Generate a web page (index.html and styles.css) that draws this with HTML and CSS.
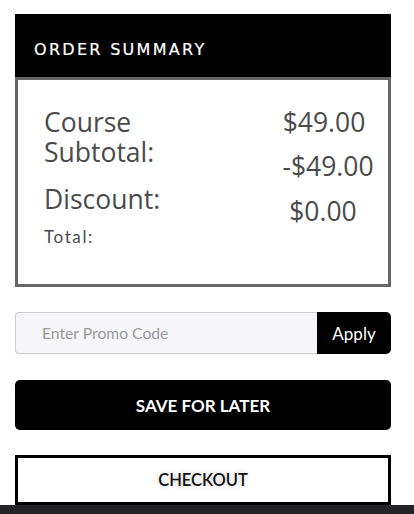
FILE: index.html
```html
<!DOCTYPE html>
<html lang="en">
<head>
<meta charset="utf-8">
<title>Order Summary</title>
<link rel="stylesheet" href="styles.css">
</head>
<body>
<div class="page">
  <section class="summary">
    <h2 class="summary-title">ORDER SUMMARY</h2>
    <div class="summary-body">
      <div class="labels">
        <div class="label big">Course Subtotal:</div>
        <div class="label big discount">Discount:</div>
        <div class="label small">Total:</div>
      </div>
      <div class="values">
        <div class="value">$49.00</div>
        <div class="value v2">-$49.00</div>
        <div class="value v3">$0.00</div>
      </div>
    </div>
  </section>

  <form class="promo" onsubmit="return false;">
    <input class="promo-input" type="text" placeholder="Enter Promo Code">
    <button class="promo-apply" type="button">Apply</button>
  </form>

  <button class="btn btn-dark" type="button">SAVE FOR LATER</button>
  <button class="btn btn-outline" type="button">CHECKOUT</button>
</div>
<div class="bottom-bar"></div>
</body>
</html>
```

FILE: styles.css
```css
* { box-sizing: border-box; }

html, body {
  margin: 0;
  padding: 0;
  background: #fff;
}

body {
  font-family: "Open Sans", "DejaVu Sans", sans-serif;
  color: #444;
}

.page {
  padding: 14px 23px 0 15px;
}

.summary-title {
  margin: 0;
  height: 63px;
  background: #000;
  color: #fff;
  font-family: "DejaVu Sans", sans-serif;
  font-weight: normal;
  font-size: 16px;
  letter-spacing: 2.3px;
  line-height: 20px;
  padding: 26px 0 0 19px;
  -webkit-text-stroke: 0.2px #fff;
}

.summary-body {
  border: 3px solid #666;
  display: flex;
  justify-content: space-between;
  padding: 27px 8px 37px 26px;
  height: 210px;
}

.labels {
  width: 160px;
}

.label.big {
  font-size: 26.5px;
  line-height: 30px;
  color: #4a4a4a;
}

.label.discount {
  margin-top: 17px;
}

.label.small {
  margin-top: 13px;
  font-family: "Lato", sans-serif;
  font-size: 17px;
  line-height: 20px;
  letter-spacing: 1.6px;
  color: #4a4a4a;
}

.values {
  width: 112px;
  text-align: center;
}

.value {
  font-size: 26.5px;
  line-height: 30px;
  color: #4a4a4a;
}

.value.v2 { margin-top: 14px; padding-left: 8px; }
.value.v3 { margin-top: 15px; padding-right: 2px; }

.promo {
  display: flex;
  margin: 25px 0 0;
  height: 42px;
}

.promo-input {
  flex: 1;
  min-width: 0;
  height: 42px;
  border: 1px solid #ccc;
  border-right: none;
  border-radius: 4px 0 0 4px;
  background: #f7f7f9;
  padding: 0 0 0 26px;
  font-family: "Lato", sans-serif;
  font-size: 15.7px;
  color: #444;
  outline: none;
}

.promo-input::placeholder {
  color: #999;
}

.promo-apply {
  width: 74px;
  height: 42px;
  border: none;
  background: #000;
  color: #fff;
  border-radius: 0 5px 5px 0;
  font-family: "Lato", sans-serif;
  font-size: 17px;
  padding: 0;
}

.btn {
  display: block;
  width: 100%;
  height: 50px;
  margin-top: 26px;
  font-family: "Lato", sans-serif;
  padding: 0;
  cursor: pointer;
}

.btn-dark {
  background: #000;
  color: #fff;
  border: none;
  border-radius: 5px;
  font-weight: bold;
  font-size: 17px;
}

.btn-outline {
  margin-top: 25px;
  background: #fff;
  color: #111;
  border: 3px solid #000;
  border-radius: 0;
  font-weight: 600;
  font-size: 16.5px;
  text-shadow: 0 0 6px rgba(0, 0, 0, 0.2);
}

.bottom-bar {
  position: fixed;
  left: 0;
  right: 0;
  bottom: 0;
  height: 9px;
  background: #232227;
}
```
